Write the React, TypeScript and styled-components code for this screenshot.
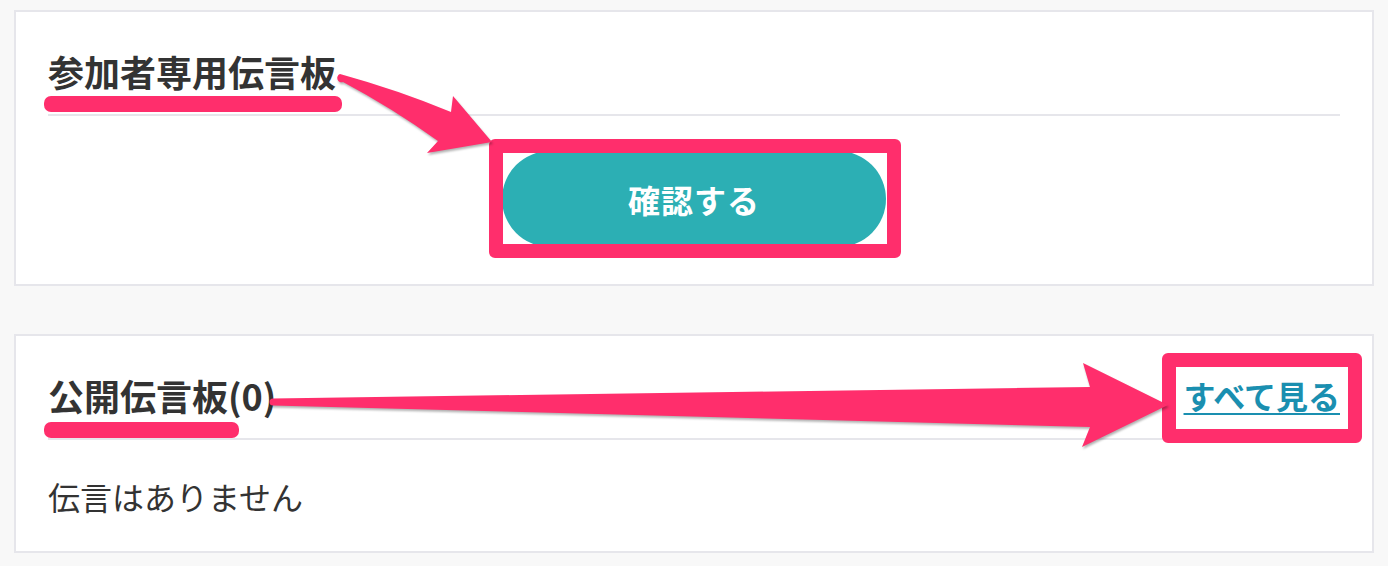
import React from 'react'
import styled, { createGlobalStyle } from 'styled-components'

const GlobalStyle = createGlobalStyle`
  html, body {
    margin: 0;
    padding: 0;
    background: #f8f8f8;
  }
  body {
    font-family: 'Noto Sans CJK JP', 'Noto Sans', sans-serif;
    color: #333;
  }
`

const pink = '#ff2e6c'
const line = '#e6e6eb'

const Page = styled.div`
  position: relative;
  display: flex;
  flex-direction: column;
  gap: 48px;
  padding: 10px 14px 13px;
`

const Card = styled.section`
  background: #fff;
  border: 2px solid ${line};
  padding: 32px 32px ${(p: { $bottom: number }) => p.$bottom}px;
`

const CardHeader = styled.div`
  display: flex;
  justify-content: space-between;
  align-items: center;
  padding-bottom: 16px;
  border-bottom: 2px solid ${line};
`

const Title = styled.h2<{ $mark: number; $markTop: number }>`
  position: relative;
  margin: 0;
  font-size: 36px;
  line-height: 54px;
  font-weight: 700;
  color: #333;

  &::after {
    content: '';
    position: absolute;
    left: -4px;
    top: ${(p) => p.$markTop}px;
    width: ${(p) => p.$mark}px;
    height: 16px;
    border-radius: 7px;
    background: ${pink};
  }
`

const ButtonRow = styled.div`
  display: flex;
  justify-content: center;
  padding-top: 35px;
`

const Highlight = styled.span<{ $inset: string }>`
  position: relative;
  display: inline-flex;

  &::after {
    content: '';
    position: absolute;
    inset: ${(p) => p.$inset};
    border: 14px solid ${pink};
    border-radius: 6px;
    pointer-events: none;
  }
`

const ConfirmButton = styled.button`
  width: 384px;
  height: 96px;
  border: none;
  border-radius: 48px;
  background: #2cafb4;
  color: #fff;
  font-family: inherit;
  font-size: 32px;
  font-weight: 700;
  letter-spacing: 1px;
  cursor: pointer;
`

const ViewAll = styled.a`
  font-size: 32px;
  line-height: 48px;
  font-weight: 700;
  color: #1a8fb0;
  text-decoration: underline;
  text-decoration-thickness: 2px;
  text-underline-offset: 4px;
`

const Empty = styled.p`
  margin: 32px 0 0;
  font-size: 32px;
  line-height: 48px;
  color: #333;
`

const Arrows = styled.svg`
  position: absolute;
  top: 0;
  left: 0;
  pointer-events: none;
  filter: drop-shadow(1px 2px 1px rgba(0, 0, 0, 0.3));
`

export default function App() {
  return (
    <>
      <GlobalStyle />
      <Page>
        <Card $bottom={37}>
          <CardHeader>
            <Title $mark={298} $markTop={52}>参加者専用伝言板</Title>
          </CardHeader>
          <ButtonRow>
            <Highlight $inset="-12px -15px -11px -13px">
              <ConfirmButton>確認する</ConfirmButton>
            </Highlight>
          </ButtonRow>
        </Card>

        <Card $bottom={31}>
          <CardHeader>
            <Title $mark={195} $markTop={54}>公開伝言板(0)</Title>
            <Highlight $inset="-18px -22px -24px -22px">
              <ViewAll href="#">すべて見る</ViewAll>
            </Highlight>
          </CardHeader>
          <Empty>伝言はありません</Empty>
        </Card>

        <Arrows width="1388" height="566" viewBox="0 0 1388 566">
          <path
            fill={pink}
            d="M340 74 Q398 90 451 112 L453 96 L492 142 L427 153 L438 141 Q392 108 343 82 A4 4 0 0 1 340 74 Z"
          />
          <path
            fill={pink}
            d="M273 398.5 L1090 387 L1083 363 L1168 405 L1082 447 L1090 427 L273 405.5 A3.5 3.5 0 0 1 273 398.5 Z"
          />
        </Arrows>
      </Page>
    </>
  )
}
